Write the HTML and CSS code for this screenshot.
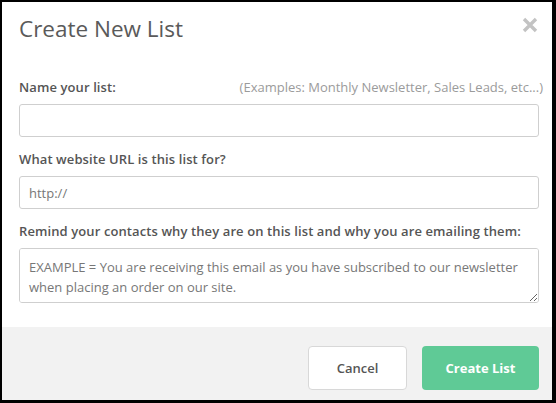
FILE: index.html
```html
<!DOCTYPE html>
<html lang="en">
<head>
<meta charset="utf-8">
<title>Create New List</title>
<link rel="stylesheet" href="styles.css">
</head>
<body>
<div class="dialog">
  <div class="dialog-header">
    <h1 class="dialog-title">Create New List</h1>
    <button class="close-btn" aria-label="Close">
      <svg width="16" height="16" viewBox="0 0 16 16"><path d="M2 2 L14 14 M14 2 L2 14" stroke="#c3c3c3" stroke-width="3.4" stroke-linecap="butt" fill="none"/></svg>
    </button>
  </div>
  <div class="dialog-body">
    <div class="field">
      <div class="label-row">
        <label class="field-label">Name your list:</label>
        <span class="hint">(Examples: Monthly Newsletter, Sales Leads, etc...)</span>
      </div>
      <input class="text-input" type="text">
    </div>
    <div class="field">
      <div class="label-row">
        <label class="field-label">What website URL is this list for?</label>
      </div>
      <input class="text-input" type="text" placeholder="http://">
    </div>
    <div class="field">
      <div class="label-row">
        <label class="field-label">Remind your contacts why they are on this list and why you are emailing them:</label>
      </div>
      <textarea class="text-area" placeholder="EXAMPLE = You are receiving this email as you have subscribed to our newsletter when placing an order on our site."></textarea>
    </div>
  </div>
  <div class="dialog-footer">
    <button class="btn btn-cancel">Cancel</button>
    <button class="btn btn-primary">Create List</button>
  </div>
</div>
</body>
</html>
```
FILE: styles.css
```css
html, body {
  margin: 0;
  padding: 0;
  background: #000;
}
body {
  padding: 2px 4px 3px 2px;
  font-family: "Open Sans", "Liberation Sans", sans-serif;
}
.dialog {
  width: 550px;
  height: 398px;
  background: #fff;
  display: flex;
  flex-direction: column;
  box-sizing: border-box;
}
.dialog-header {
  display: flex;
  justify-content: space-between;
  align-items: flex-start;
  padding: 11px 14px 0 17px;
}
.dialog-title {
  margin: 2px 0 0 0;
  font-size: 22.5px;
  line-height: 28px;
  font-weight: 400;
  color: #5a5a5a;
}
.close-btn {
  background: none;
  border: 0;
  padding: 0;
  margin-top: 4px;
  width: 16px;
  height: 16px;
  cursor: pointer;
  display: block;
}
.close-btn svg { display: block; }
.dialog-body {
  padding: 35px 13px 0 17px;
  flex: 1;
}
.field { margin-bottom: 13px; }
.label-row {
  display: flex;
  justify-content: space-between;
  align-items: baseline;
  margin-bottom: 8px;
  line-height: 18px;
}
.field-label {
  font-size: 13px;
  font-weight: 600;
  color: #555;
  letter-spacing: 0.1px;
}
.hint {
  font-size: 13px;
  color: #9b9b9b;
  margin-right: -4px;
}
.text-input, .text-area {
  display: block;
  width: 100%;
  box-sizing: border-box;
  border: 1px solid #cfcfcf;
  border-radius: 3px;
  font-family: "Open Sans", "Liberation Sans", sans-serif;
  font-size: 13px;
  color: #555;
  padding: 0 9px;
  margin: 0;
  outline: none;
}
.text-input { height: 33px; }
.text-area {
  height: 55px;
  padding: 8px 9px;
  line-height: 20px;
  resize: vertical;
}
.text-input::placeholder, .text-area::placeholder { color: #777; opacity: 1; }
.dialog-footer {
  background: #f2f2f2;
  height: 73px;
  box-sizing: border-box;
  padding: 19px 13px 0 0;
  display: flex;
  justify-content: flex-end;
  gap: 15px;
}
.btn {
  height: 44px;
  border-radius: 4px;
  font-family: "Open Sans", "Liberation Sans", sans-serif;
  font-size: 13px;
  cursor: pointer;
}
.btn-cancel {
  width: 99px;
  background: #fff;
  border: 1px solid #d8d8d8;
  color: #555;
  font-weight: 600;
}
.btn-primary {
  width: 117px;
  background: #5fca96;
  border: 0;
  color: #fff;
  font-weight: 700;
}
```
